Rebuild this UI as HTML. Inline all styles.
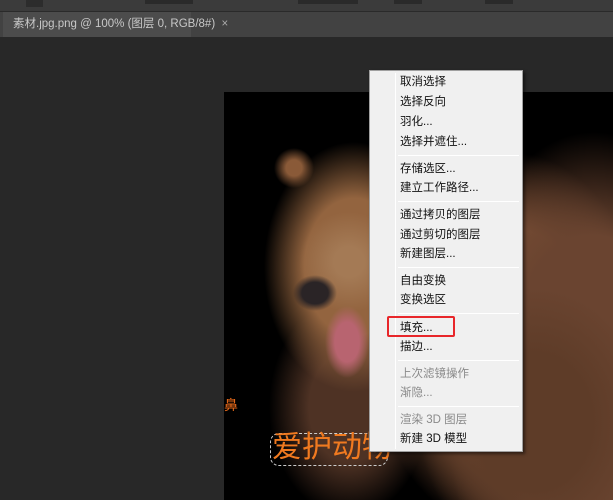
<!DOCTYPE html>
<html><head><meta charset="utf-8"><style>
*{margin:0;padding:0;box-sizing:border-box}
html{width:613px;height:500px;overflow:hidden}
body{width:613px;height:500px;overflow:hidden;background:#282828;position:relative;font-family:"Liberation Sans","Noto Sans CJK SC",sans-serif}
.tb{position:absolute;left:0;top:0;width:613px;height:12px;background:#3b3b3b;border-bottom:1px solid #2a2a2a}
.tabbar{position:absolute;left:0;top:12px;width:613px;height:25px;background:#424242}
.tab{position:absolute;left:3px;top:0;width:188px;height:25px;background:#4c4c4c;color:#c8c8c8;font-size:11.5px;line-height:25px;padding-left:10px;white-space:nowrap}
.img{position:absolute;left:224px;top:92px;width:389px;height:408px;overflow:hidden;
background:
radial-gradient(ellipse 22px 18px at 91px 201px,#2a2426 60%,rgba(42,36,38,0) 100%),
radial-gradient(ellipse 22px 36px at 123px 250px,#b86470 55%,rgba(184,100,112,0) 100%),
radial-gradient(ellipse 50px 50px at 125px 170px,#a47a55 30%,rgba(164,122,85,0) 100%),
radial-gradient(ellipse 20px 20px at 70px 76px,#8a5a38 40%,rgba(138,90,56,0) 100%),
radial-gradient(ellipse 90px 125px at 130px 175px,#93643f 55%,rgba(147,100,63,0) 100%),
radial-gradient(ellipse 80px 110px at 125px 315px,#4e3224 50%,rgba(78,50,36,0) 100%),
radial-gradient(ellipse 115px 135px at 310px 330px,#5e3c28 50%,rgba(94,60,40,0) 100%),
radial-gradient(ellipse 150px 260px at 370px 300px,#6a4430 60%,rgba(106,68,48,0) 100%),
radial-gradient(ellipse 140px 190px at 285px 250px,#7a4e34 60%,rgba(122,78,52,0) 100%),
#000}
.menu{position:absolute;left:369px;top:70px;width:154px;height:382px;background:#f0f0f0;border:1px solid #a0a0a0;box-shadow:2px 2px 3px rgba(0,0,0,.5)}
.gut{position:absolute;left:25px;top:2px;bottom:2px;width:1px;background:#e2e2e2;border-right:1px solid #fff}
.it{position:absolute;left:30px;font-size:11.5px;color:#111;white-space:nowrap;line-height:14px}
.dis{color:#8a8a8a}
.sep{position:absolute;left:28px;right:3px;height:1px;background:#d8d8d8;border-bottom:1px solid #fff}
.red{position:absolute;left:17px;top:245px;width:68px;height:21px;border:2px solid #e8262a;border-radius:2px}
</style></head><body>
<div class="tb">
<div style="position:absolute;left:26px;top:0;width:17px;height:7px;background:#2c2c2c"></div>
<div style="position:absolute;left:145px;top:0;width:48px;height:4px;background:#2a2a2a"></div>
<div style="position:absolute;left:298px;top:0;width:60px;height:4px;background:#2a2a2a"></div>
<div style="position:absolute;left:394px;top:0;width:28px;height:4px;background:#2a2a2a"></div>
<div style="position:absolute;left:485px;top:0;width:28px;height:4px;background:#2a2a2a"></div>
</div>
<div class="tabbar"><div class="tab">素材.jpg.png @ 100% (图层 0, RGB/8#) &nbsp;<span style="color:#aaa">×</span></div></div>
<div class="img">
<div style="position:absolute;left:0;top:305px;color:#e86a1a;font-size:14px;line-height:16px">鼻</div>
<div style="position:absolute;left:46px;top:341px;width:118px;height:33px;border:1px dashed #ccc;border-radius:9px"></div>
<div style="position:absolute;left:48px;top:338px;color:#f07a20;font-size:30px;line-height:36px;white-space:nowrap">爱护动物</div>
</div>
<div class="menu">
<div class="gut"></div>
<div class="it" style="top:4px">取消选择</div>
<div class="it" style="top:24px">选择反向</div>
<div class="it" style="top:44px">羽化...</div>
<div class="it" style="top:64px">选择并遮住...</div>
<div class="sep" style="top:84px"></div>
<div class="it" style="top:91px">存储选区...</div>
<div class="it" style="top:110px">建立工作路径...</div>
<div class="sep" style="top:130px"></div>
<div class="it" style="top:137px">通过拷贝的图层</div>
<div class="it" style="top:157px">通过剪切的图层</div>
<div class="it" style="top:176px">新建图层...</div>
<div class="sep" style="top:196px"></div>
<div class="it" style="top:203px">自由变换</div>
<div class="it" style="top:222px">变换选区</div>
<div class="sep" style="top:242px"></div>
<div class="it" style="top:250px">填充...</div>
<div class="it" style="top:269px">描边...</div>
<div class="sep" style="top:289px"></div>
<div class="it dis" style="top:296px">上次滤镜操作</div>
<div class="it dis" style="top:315px">渐隐...</div>
<div class="sep" style="top:335px"></div>
<div class="it dis" style="top:342px">渲染 3D 图层</div>
<div class="it" style="top:361px">新建 3D 模型</div>
<div class="red"></div>
</div>
</body></html>
